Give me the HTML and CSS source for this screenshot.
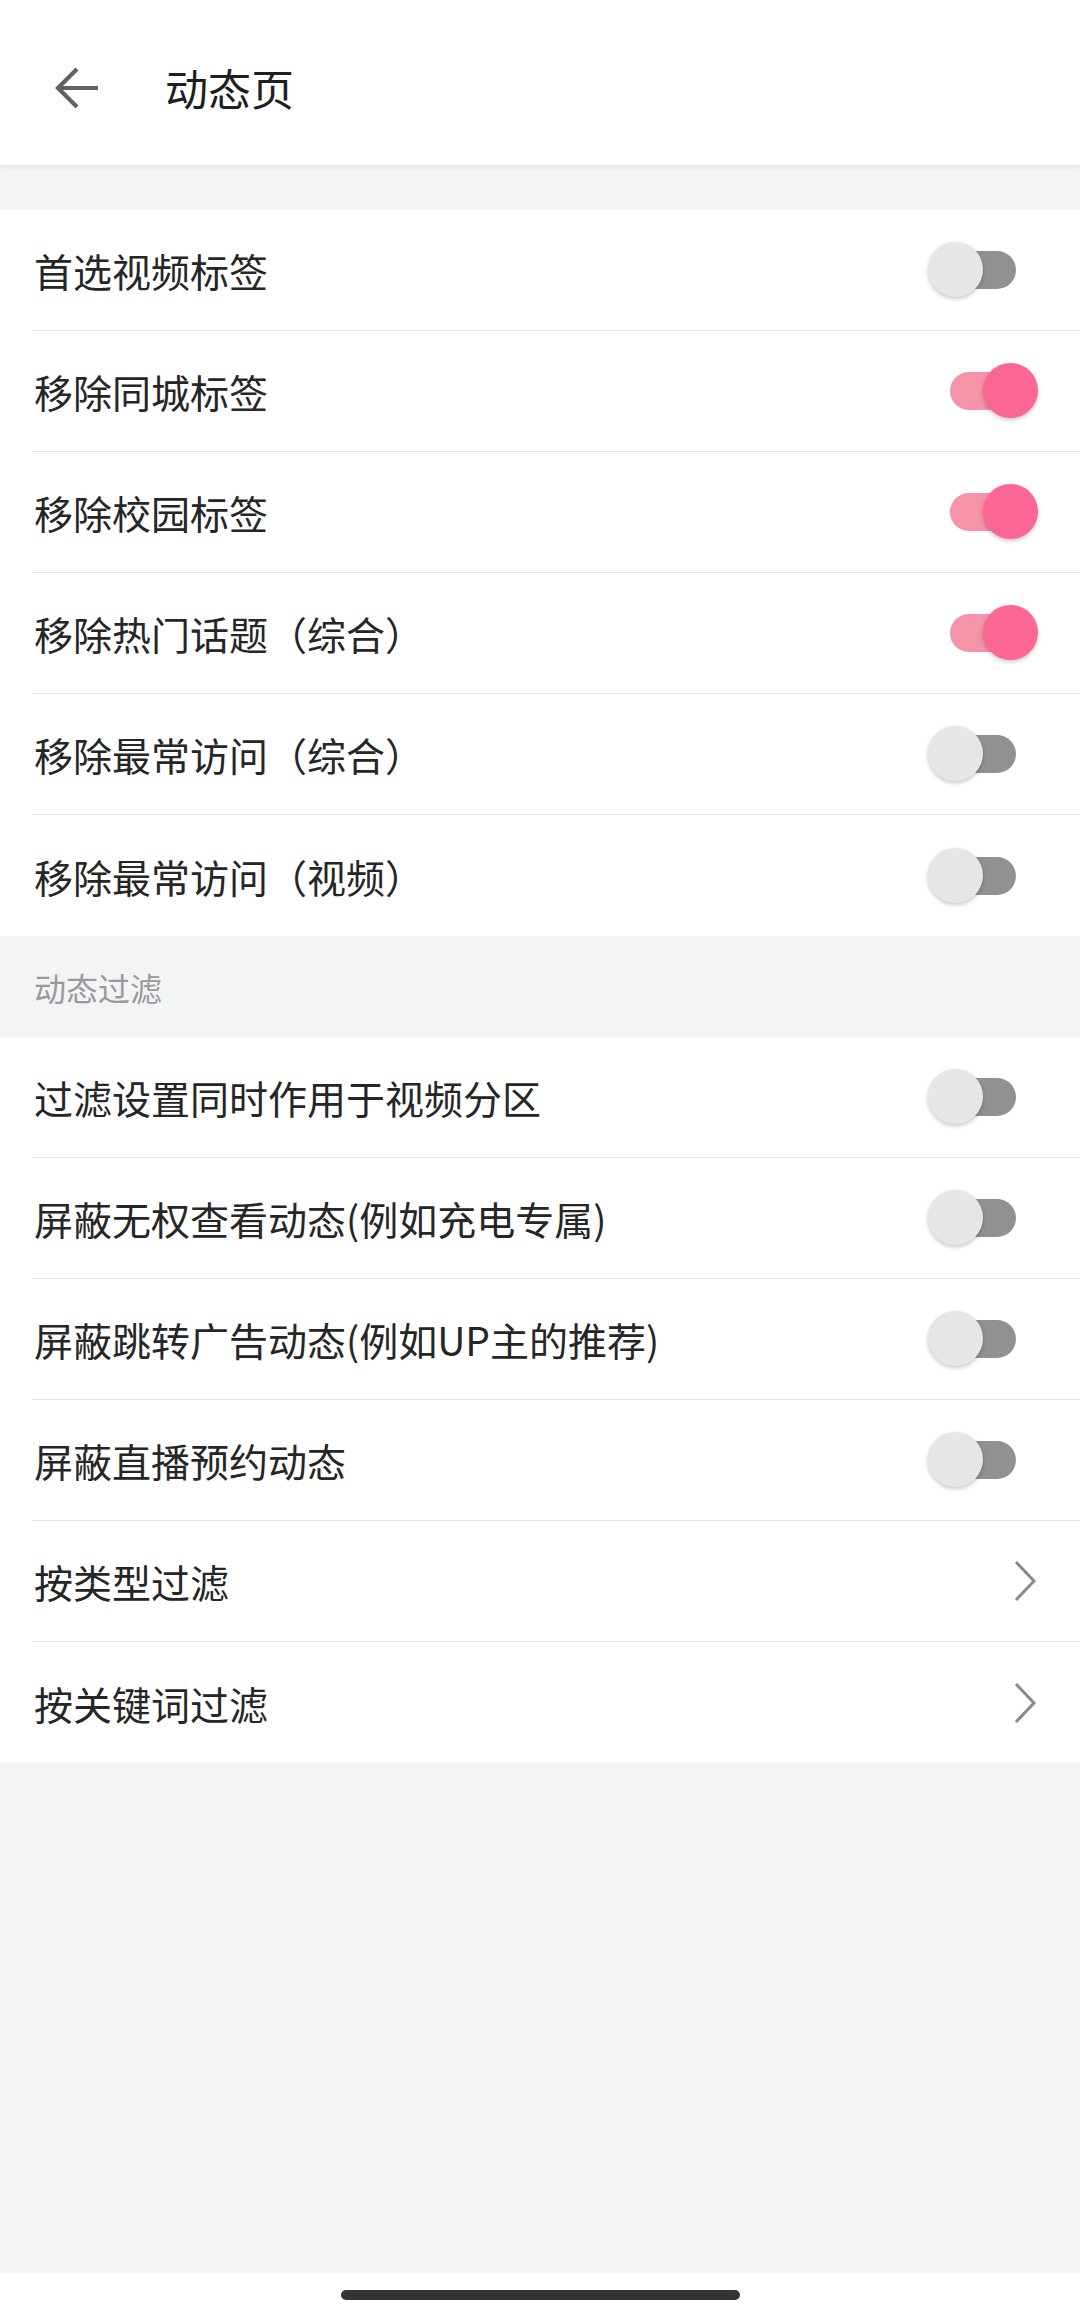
FILE: index.html
```html
<!DOCTYPE html>
<html>
<head>
    <title>动态页</title>
    <link rel="stylesheet" href="styles.css">
</head>
<body>
    <div class="page">
        <header class="topbar">
            <svg class="back" width="48" height="48" viewBox="0 0 48 48">
                <path d="M45 24 H6 M24 5 L5 24 L24 43" fill="none" stroke="#616161" stroke-width="4.2" stroke-linecap="butt"/>
            </svg>
            <h1>动态页</h1>
        </header>

        <div class="spacer"></div>

        <div class="group">
            <div class="row"><span>首选视频标签</span><div class="control"><div class="switch"><i></i><b></b></div></div></div>
            <div class="row"><span>移除同城标签</span><div class="control"><div class="switch on"><i></i><b></b></div></div></div>
            <div class="row"><span>移除校园标签</span><div class="control"><div class="switch on"><i></i><b></b></div></div></div>
            <div class="row"><span>移除热门话题（综合）</span><div class="control"><div class="switch on"><i></i><b></b></div></div></div>
            <div class="row"><span>移除最常访问（综合）</span><div class="control"><div class="switch"><i></i><b></b></div></div></div>
            <div class="row"><span>移除最常访问（视频）</span><div class="control"><div class="switch"><i></i><b></b></div></div></div>
        </div>

        <div class="section-title">动态过滤</div>

        <div class="group">
            <div class="row"><span>过滤设置同时作用于视频分区</span><div class="control"><div class="switch"><i></i><b></b></div></div></div>
            <div class="row"><span>屏蔽无权查看动态(例如充电专属)</span><div class="control"><div class="switch"><i></i><b></b></div></div></div>
            <div class="row"><span>屏蔽跳转广告动态(例如UP主的推荐)</span><div class="control"><div class="switch"><i></i><b></b></div></div></div>
            <div class="row"><span>屏蔽直播预约动态</span><div class="control"><div class="switch"><i></i><b></b></div></div></div>
            <div class="row"><span>按类型过滤</span><div class="control"><svg class="chevron" width="24" height="42" viewBox="0 0 24 42"><path d="M3 2 L21 21 L3 40" fill="none" stroke="#8a8a8a" stroke-width="3"/></svg></div></div>
            <div class="row"><span>按关键词过滤</span><div class="control"><svg class="chevron" width="24" height="42" viewBox="0 0 24 42"><path d="M3 2 L21 21 L3 40" fill="none" stroke="#8a8a8a" stroke-width="3"/></svg></div></div>
        </div>

        <div class="fill"></div>

        <div class="home-strip"><div class="home-bar"></div></div>
    </div>
</body>
</html>
```

FILE: styles.css
```css
body {
    margin: 0;
    background-color: #f3f4f6;
    font-family: "Noto Sans CJK SC", "Noto Sans", sans-serif;
    color: #222;
}
.page {
    display: flex;
    flex-direction: column;
    min-height: 100vh;
}
.topbar {
    height: 165px;
    background-color: #fff;
    display: flex;
    align-items: center;
    box-shadow: 0 2px 6px rgba(0, 0, 0, 0.08);
    position: relative;
    z-index: 1;
}
.back {
    margin-left: 53px;
    margin-top: 10px;
}
h1 {
    margin: 8px 0 0 64px;
    font-size: 43px;
    font-weight: 400;
    color: #1f1f1f;
}
.spacer {
    height: 45px;
}
.group {
    background-color: #fff;
}
.row {
    height: 121px;
    display: flex;
    align-items: center;
    justify-content: space-between;
    margin-left: 32px;
    padding-right: 42px;
    border-bottom: 1px solid #e6e6e6;
    box-sizing: border-box;
    font-size: 39px;
    color: #262626;
}
.row:last-child {
    border-bottom: none;
}
.row span {
    margin-left: 2px;
}
.control {
    width: 110px;
    display: flex;
    justify-content: flex-end;
}
.chevron {
    margin-right: 1px;
}
.switch {
    position: relative;
    width: 110px;
    height: 56px;
}
.switch i {
    position: absolute;
    left: 22px;
    top: 9px;
    width: 66px;
    height: 38px;
    border-radius: 19px;
    background-color: #919191;
}
.switch b {
    position: absolute;
    left: 0;
    top: 0;
    width: 55px;
    height: 55px;
    border-radius: 50%;
    background-color: #e6e6e6;
    box-shadow: 0 2px 4px rgba(0, 0, 0, 0.22);
}
.switch.on i {
    background-color: #f593a9;
}
.switch.on b {
    left: 55px;
    background-color: #fc6695;
}
.section-title {
    height: 101px;
    display: flex;
    align-items: center;
    padding-left: 34px;
    font-size: 32px;
    color: #9a9a9a;
}
.fill {
    flex: 1;
}
.home-strip {
    height: 44px;
    background-color: #fff;
    display: flex;
    justify-content: center;
    align-items: flex-start;
}
.home-bar {
    width: 399px;
    height: 10px;
    margin-top: 17px;
    border-radius: 5px;
    background-color: #333;
}
```
